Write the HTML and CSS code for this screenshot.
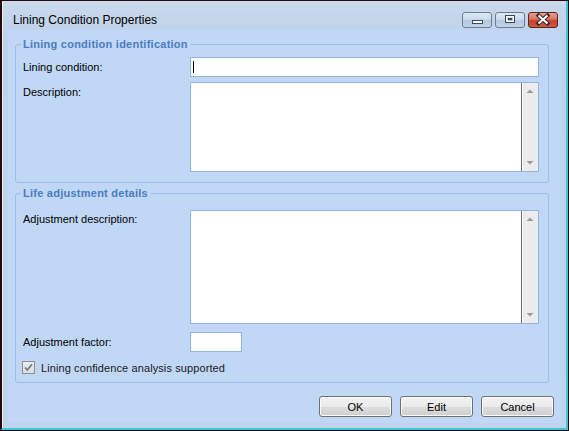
FILE: index.html
```html
<!DOCTYPE html>
<html>
<head>
<meta charset="utf-8">
<link rel="stylesheet" href="styles.css">
</head>
<body>
<div class="window">
  <div class="inner">
    <div class="titlebar">
      <div class="title">Lining Condition Properties</div>
      <div class="caption-buttons">
        <div class="cbtn">
          <svg width="30" height="16" viewBox="0 0 30 16"><rect x="10.5" y="8.5" width="10" height="3" fill="#fff" stroke="#3c4656"/></svg>
        </div>
        <div class="cbtn">
          <svg width="30" height="16" viewBox="0 0 30 16"><rect x="10.5" y="3.5" width="9" height="7" fill="none" stroke="#3c4656" stroke-width="1"/><rect x="11.5" y="4.5" width="7" height="5" fill="none" stroke="#fff" stroke-width="1"/><rect x="13" y="6" width="4" height="2" fill="#3c4656"/></svg>
        </div>
        <div class="cbtn close">
          <svg width="30" height="16" viewBox="0 0 30 16"><path d="M10.5 3.5 L19.5 11.5 M19.5 3.5 L10.5 11.5" stroke="#3a2a2a" stroke-width="4" stroke-linecap="square"/><path d="M10.5 3.5 L19.5 11.5 M19.5 3.5 L10.5 11.5" stroke="#fff" stroke-width="2"/></svg>
        </div>
      </div>
    </div>
    <div class="content">
      <fieldset class="group g1">
        <legend>Lining condition identification</legend>
        <div class="form-grid">
          <label class="lbl center">Lining condition:</label>
          <div class="input"><span class="caret"></span></div>
          <label class="lbl top3">Description:</label>
          <div class="textarea ta1">
            <div class="ta-body"></div>
            <div class="scroll">
              <svg width="16" height="8" viewBox="0 0 16 8"><path d="M4.5 6 L8 2.5 L11.5 6 Z" fill="#9c9c9c"/></svg>
              <svg width="16" height="8" viewBox="0 0 16 8"><path d="M4.5 2 L8 5.5 L11.5 2 Z" fill="#9c9c9c"/></svg>
            </div>
          </div>
        </div>
      </fieldset>
      <fieldset class="group g2">
        <legend>Life adjustment details</legend>
        <div class="form-grid grid2">
          <label class="lbl top2">Adjustment description:</label>
          <div class="textarea ta2">
            <div class="ta-body"></div>
            <div class="scroll">
              <svg width="16" height="8" viewBox="0 0 16 8"><path d="M4.5 6 L8 2.5 L11.5 6 Z" fill="#9c9c9c"/></svg>
              <svg width="16" height="8" viewBox="0 0 16 8"><path d="M4.5 2 L8 5.5 L11.5 2 Z" fill="#9c9c9c"/></svg>
            </div>
          </div>
          <label class="lbl center">Adjustment factor:</label>
          <div class="input small"></div>
        </div>
        <div class="check-row">
          <span class="checkbox">
            <svg width="13" height="13" viewBox="0 0 13 13"><path d="M3 6.5 L5.3 9 L10 3.2" fill="none" stroke="#6c7688" stroke-width="1.7"/></svg>
          </span>
          <span class="check-label">Lining confidence analysis supported</span>
        </div>
      </fieldset>
      <div class="buttons">
        <div class="btn">OK</div>
        <div class="btn">Edit</div>
        <div class="btn">Cancel</div>
      </div>
    </div>
  </div>
</div>
</body>
</html>
```

FILE: styles.css
```css
* { box-sizing: border-box; }
html, body { margin: 0; padding: 0; }
body {
  width: 569px;
  height: 431px;
  font-family: "Liberation Sans", Arial, sans-serif;
  font-size: 11px;
  color: #000;
  background: #2a0a0a;
}
.window {
  width: 569px;
  height: 431px;
  border: 1px solid #2a0808;
}
.inner {
  height: 100%;
  display: flex;
  flex-direction: column;
  border-left: 1px solid #2a0808;
  border-right: 2px solid #3cc6da;
  border-bottom: 2px solid #3cc6da;
  background: linear-gradient(#cad9ec, #bcd1ea 40px, #bed3ec);
  box-shadow: inset 1px 0 0 #e6eef8;
  padding: 0 5px 5px 6px;
}
.titlebar {
  height: 29px;
  display: flex;
  align-items: flex-start;
  justify-content: space-between;
  margin-left: -6px;
  margin-right: -5px;
  padding: 0 8px 0 11px;
}
.title {
  font-size: 12px;
  line-height: 14px;
  padding-top: 12px;
  color: #000;
}
.caption-buttons {
  display: flex;
  gap: 3px;
  padding-top: 11px;
}
.cbtn {
  width: 30px;
  height: 16px;
  border: 1px solid #6d7c92;
  border-radius: 3px;
  background: linear-gradient(#dce7f4, #c9d9ec 50%, #b3c9e3 51%, #bfd3ea);
  display: flex;
  align-items: center;
  justify-content: center;
  overflow: hidden;
}
.cbtn svg { display: block; margin: -1px; }
.cbtn.close {
  border-color: #5a2420;
  background: linear-gradient(#e8a092, #d7705f 45%, #c4402c 55%, #cf5a44);
}
.content {
  flex: 1;
  background: #c1d7f6;
  padding: 7px 7px 6px 7px;
  display: flex;
  flex-direction: column;
}
.group {
  margin: 0 5px 0 0;
  border: 1px solid #9fbde6;
  border-radius: 3px;
  padding: 6px 9px 9px 7px;
  min-width: 0;
}
.group legend {
  font-weight: bold;
  font-size: 11px;
  line-height: 14px;
  letter-spacing: 0.25px;
  color: #4a7dc1;
  padding: 0 3px 0 2px;
  margin-left: -2px;
}
.g1 { height: 146px; }
.g2 { margin-top: 3px; height: 197px; padding-top: 10px; padding-bottom: 8px; }
.form-grid {
  display: grid;
  grid-template-columns: 167px 1fr;
  row-gap: 5px;
}
.grid2 { row-gap: 8px; }
.lbl {
  line-height: 14px;
  white-space: nowrap;
}
.lbl.center { align-self: center; }
.lbl.top3 { padding-top: 3px; }
.lbl.top2 { padding-top: 2px; }
.input {
  height: 20px;
  background: #fff;
  border: 1px solid #92b4e2;
  position: relative;
}
.input.small { width: 52px; }
.caret {
  position: absolute;
  left: 2px;
  top: 3px;
  width: 1px;
  height: 12px;
  background: #000;
}
.textarea {
  background: #fff;
  border: 1px solid #92b4e2;
  display: flex;
}
.ta1 { height: 90px; }
.ta2 { height: 114px; }
.ta-body { flex: 1; }
.scroll {
  width: 17px;
  border-left: 1px solid #707070;
  background: #ececec;
  box-shadow: inset 1px 0 0 #f7f7f7;
  display: flex;
  flex-direction: column;
  justify-content: space-between;
  padding: 4px 0 4px 0;
}
.scroll svg { display: block; }
.check-row {
  display: flex;
  align-items: center;
  margin-top: 9px;
  margin-left: -1px;
  height: 13px;
}
.checkbox {
  width: 13px;
  height: 13px;
  border: 1px solid #8f9093;
  background: linear-gradient(#eeeeee, #dcdcdc);
  display: flex;
}
.checkbox svg { display: block; margin: -1px; }
.check-label {
  margin-left: 6px;
  line-height: 14px;
  letter-spacing: 0.1px;
  color: #1a1a1a;
}
.buttons {
  margin-top: 13px;
  display: flex;
  justify-content: flex-end;
  gap: 8px;
}
.btn {
  width: 73px;
  height: 21px;
  border: 1px solid #707070;
  border-radius: 3px;
  background: linear-gradient(#f2f2f2, #ebebeb 50%, #dddddd 51%, #cfcfcf);
  box-shadow: inset 0 0 0 1px #fbfbfb;
  display: flex;
  align-items: center;
  justify-content: center;
  line-height: 14px;
}
```
